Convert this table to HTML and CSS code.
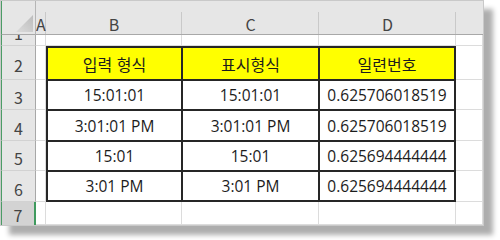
FILE: index.html
```html
<!DOCTYPE html>
<html lang="ko">
<head>
<meta charset="utf-8">
<link rel="stylesheet" href="styles.css">
</head>
<body>
<div class="sheet">
  <div class="corner"><svg class="tri" width="18" height="18" viewBox="0 0 18 18"><defs><linearGradient id="g" x1="0" y1="1" x2="1" y2="0"><stop offset="0" stop-color="#dcdcdc"/><stop offset="1" stop-color="#bcbcbc"/></linearGradient></defs><polygon points="0,17 17,0 17,17" fill="url(#g)"/></svg></div>
  <div class="colh cola">A</div>
  <div class="colh">B</div>
  <div class="colh">C</div>
  <div class="colh">D</div>
  <div class="colh cole"></div>

  <div class="rowh r1"><span>1</span></div>
  <div class="cell"></div><div class="cell"></div><div class="cell"></div><div class="cell"></div><div class="cell"></div>

  <div class="rowh"><span>2</span></div>
  <div class="cell"></div>
  <div class="data">
    <div class="d hd">입력 형식</div><div class="d hd">표시형식</div><div class="d hd">일련번호</div>
    <div class="d">15:01:01</div><div class="d">15:01:01</div><div class="d">0.625706018519</div>
    <div class="d">3:01:01 PM</div><div class="d">3:01:01 PM</div><div class="d">0.625706018519</div>
    <div class="d">15:01</div><div class="d">15:01</div><div class="d">0.625694444444</div>
    <div class="d">3:01 PM</div><div class="d">3:01 PM</div><div class="d">0.625694444444</div>
  </div>
  <div class="cell"></div>

  <div class="rowh"><span>3</span></div>
  <div class="cell"></div><div class="cell"></div>
  <div class="rowh"><span>4</span></div>
  <div class="cell"></div><div class="cell"></div>
  <div class="rowh"><span>5</span></div>
  <div class="cell"></div><div class="cell"></div>
  <div class="rowh"><span>6</span></div>
  <div class="cell"></div><div class="cell"></div>

  <div class="rowh r7"><span>7</span></div>
  <div class="cell"></div><div class="cell"></div><div class="cell"></div><div class="cell"></div><div class="cell"></div>
</div>
</body>
</html>
```

FILE: styles.css
```css
html, body {
  margin: 0;
  padding: 0;
  background: #ffffff;
}
body {
  width: 500px;
  height: 240px;
  overflow: hidden;
  font-family: "Noto Sans CJK KR", "Noto Sans", sans-serif;
}
.sheet {
  width: 484px;
  height: 226px;
  box-sizing: border-box;
  border: 1px solid #c9c9c9;
  background: #ffffff;
  box-shadow: 9px 9px 5px rgba(0, 0, 0, 0.32);
  display: grid;
  grid-template-columns: 35px 10px 136px 137px 137px 27px;
  grid-template-rows: 34px 11px 34px 30px 31px 30px 31px 23px;
  overflow: hidden;
}
.corner {
  background: #e6e6e6;
  border-left: 1px solid #4b9c66;
  border-bottom: 1px solid #a8a8a8;
  border-right: 1px solid #b5b5b5;
  box-sizing: border-box;
  display: flex;
  align-items: flex-end;
  justify-content: flex-end;
  padding: 0 1px 1px 0;
}
.tri {
  display: block;
}
.colh {
  background: #e6e6e6 linear-gradient(#c9c9c9, #c9c9c9) right bottom / 1px 22px no-repeat;
  border-bottom: 1px solid #a8a8a8;
  box-sizing: border-box;
  color: #444444;
  font-size: 16px;
  line-height: 16px;
  display: flex;
  align-items: center;
  justify-content: center;
  padding-top: 12px;
  overflow: hidden;
}
.cola {
  justify-content: flex-start;
  padding-left: 0;
}
.cole {
  background: #e6e6e6;
}
.rowh {
  background: #e6e6e6;
  border-left: 1px solid #4b9c66;
  border-right: 1px solid #a8a8a8;
  border-bottom: 1px solid #d2d2d2;
  box-sizing: border-box;
  color: #444444;
  font-size: 16px;
  line-height: 16px;
  display: flex;
  align-items: center;
  justify-content: center;
  padding-top: 5px;
  overflow: hidden;
}
.rowh.r1 {
  align-items: flex-start;
  padding-top: 0;
}
.rowh.r1 span {
  margin-top: -10px;
}
.rowh.r7 {
  background: #d3d3d3;
  border-right: 2px solid #3f9a5e;
  border-bottom: none;
  padding-top: 3px;
}
.cell {
  border-right: 1px solid #dcdcdc;
  border-bottom: 1px solid #dcdcdc;
  box-sizing: border-box;
}
.data {
  grid-column: 3 / 6;
  grid-row: 3 / 8;
  box-sizing: border-box;
  border: 2px solid #262626;
  background: #262626;
  display: grid;
  grid-template-columns: 133px 135px 134px;
  grid-template-rows: 31px 28px 29px 28px 28px;
  gap: 2px;
}
.d {
  background: #ffffff;
  color: #1c1c1c;
  font-family: "Open Sans", "Noto Sans CJK KR", sans-serif;
  font-size: 15.5px;
  display: flex;
  align-items: center;
  justify-content: center;
  white-space: nowrap;
}
.d.hd {
  background: #ffff00;
  font-family: "Noto Sans CJK KR", sans-serif;
  font-size: 16px;
}
```
